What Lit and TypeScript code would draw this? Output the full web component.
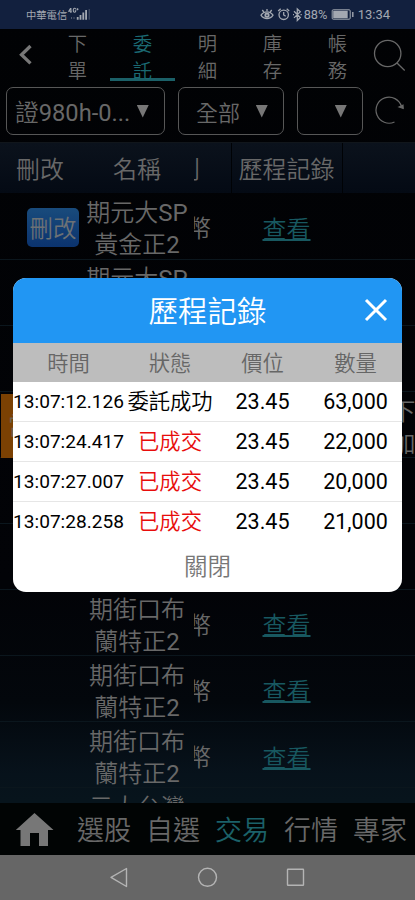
import { LitElement, html, css, nothing } from "lit";
import { customElement } from "lit/decorators.js";
import { classMap } from "lit/directives/class-map.js";

interface Position {
  name: [string, string, string, string];
  editable?: boolean;
  swiped?: boolean;
}

const gold: Position["name"] = ["期元大", "SP", "黃金正", "2"];
const rand: Position["name"] = ["期街口布", "", "蘭特正", "2"];

const positions: Position[] = [
  { name: gold, editable: true },
  { name: gold },
  { name: rand },
  { name: rand, swiped: true },
  { name: rand },
  { name: rand },
  { name: rand },
  { name: rand },
  { name: rand },
  { name: ["元大台灣", "", "正", "2"] },
];

const history = [
  { time: "13:07:12.126", state: "委託成功", price: "23.45", qty: "63,000", done: false },
  { time: "13:07:24.417", state: "已成交", price: "23.45", qty: "22,000", done: true },
  { time: "13:07:27.007", state: "已成交", price: "23.45", qty: "20,000", done: true },
  { time: "13:07:28.258", state: "已成交", price: "23.45", qty: "21,000", done: true },
];

@customElement("status-bar")
class StatusBar extends LitElement {
  static styles = css`
    :host { display: flex; align-items: center; height: 29px; box-sizing: border-box; padding: 0 25px 0 26px; background: #12203e; color: #a3a8b1; font: 400 10.3px/29px Roboto, "Noto Sans CJK TC", sans-serif; }
    .carrier { padding-top: 1px; }
    .cell { margin-left: 1px; }
    .spacer { flex: 1; }
    .right { display: flex; align-items: center; height: 29px; }
    .pct { font-size: 12.8px; width: 27px; }
    .time { font-size: 13px; margin-left: 4px; }
    svg { display: block; fill: none; stroke: currentColor; }
  `;
  render() {
    return html`
      <span class="carrier">中華電信</span>
      <svg class="cell" width="23" height="29" viewBox="0 0 23 29" stroke-width="1.1">
        <path d="M2.6 8.2 .8 11.2h3M2.9 8v5M7.7 9.2c-.6-1.4-2.4-1.2-2.4.6v1c0 2 2.5 1.8 2.5 0H6.8M9.5 8.2v2M8.5 9.2h2" />
        <path d="M3.5 17v2M6 17v2" stroke-width=".7" opacity=".6" />
        <path d="M9.7 17v2.7M12.5 15v4.7M15.3 12.5v7.2M18.1 10v9.7" stroke-width="1.8" />
        <path d="M21.2 9v10.7" stroke-width="1" opacity=".4" />
      </svg>
      <span class="spacer"></span>
      <div class="right">
        <svg width="44" height="29" viewBox="260 0 44 29" stroke-width="1.3">
          <path d="M261 15.2c3-4.5 9-4.5 12 0-3 4.6-9 4.6-12 0zM267 9v2M262.3 10l1.5 2M271.7 10l-1.5 2" />
          <circle cx="267" cy="15.2" r="1.7" stroke-width="1.8" />
          <circle cx="283.7" cy="14.8" r="4.7" />
          <path d="M283.7 12v3l2 1.3M278.2 11l2.5-2.3M289.2 11l-2.5-2.3" />
          <path d="m294 11.3 6.3 6.3-3 2.8V9l3 2.7-6.3 6.2M293 14.6h1M300.5 14.6h1.3" />
        </svg>
        <span class="pct">88%</span>
        <svg width="23" height="29" viewBox="331 0 23 29">
          <rect x="332.2" y="9.8" width="18" height="9.4" rx="1" />
          <path d="M333.2 10.8h14.5v7.4h-14.5z" fill="currentColor" stroke="none" />
          <path d="M352.8 12v5" stroke-width="1.4" />
        </svg>
        <span class="time">13:34</span>
      </div>`;
  }
}

@customElement("order-table")
class OrderTable extends LitElement {
  static styles = css`
    :host { display: flex; flex-direction: column; overflow: hidden; font-size: 24px; }
    .head, .row { display: grid; grid-template-columns: 81px 113px 37.5px 111px 1fr; flex: none; }
    .head { height: 51px; line-height: 55px; background: linear-gradient(#0b121c, #040a14); border-top: 1px solid #11161b; box-sizing: border-box; margin-bottom: .5px; overflow: hidden; }
    .head div { text-align: center; border-right: 1px solid transparent; height: 50px; box-sizing: border-box; }
    .head .rule { border-right-color: #000205; }
    .row { height: 66.1px; box-sizing: border-box; border-bottom: 1px solid #0b161d; align-items: center; }
    .name { text-align: center; line-height: 32px; padding-top: 3.5px; margin-left: -1px; }
    .latin { font-weight: 400; }
    .cut { overflow: hidden; display: flex; justify-content: flex-start; height: 50px; line-height: 54px; }
    .cut span { margin-left: -7px; }
    .head .cut span { margin-left: -18px; }
    .edit { width: 52px; height: 39px; box-sizing: border-box; margin-left: 27px; border-radius: 5px; text-align: center; line-height: 42px; color: #6c7175; background: linear-gradient(#194b7c, #0b336e); font-size: 23.5px; }
    .link { text-align: center; color: #185860; line-height: 34px; text-decoration: underline; text-decoration-thickness: 1.5px; text-underline-offset: 1px; padding-top: 5px; margin-left: -1px; }
    .orange { height: 64px; margin-left: 1px; background: #7b4103; line-height: 64px; padding-left: 7px; box-sizing: border-box; color: #6d6251; }
    .more { line-height: 32px; padding-left: 49px; white-space: nowrap; padding-top: 4px; }
  `;
  render() {
    return html`
      <div class="head">
        <div>刪改</div><div>名稱</div>
        <div class="cut rule"><span>別</span></div>
        <div class="rule">歷程記錄</div><div></div>
      </div>
      ${positions.map(({ name: [a, b, c, d], swiped, editable }) => html`
        <div class="row">
          ${swiped ? html`<div class="orange">當</div>` : editable ? html`<div class="edit">刪改</div>` : html`<div></div>`}
          <div class="name">${a}<span class="latin">${b}</span><br />${c}<span class="latin">${d}</span></div>
          <div class="cut"><span>幣</span></div>
          <div class="link">查看</div>
          ${swiped ? html`<div class="more">下<br />加</div>` : nothing}
        </div>`)}`;
  }
}

@customElement("history-dialog")
class HistoryDialog extends LitElement {
  static styles = css`
    :host { display: flex; flex-direction: column; background: #fff; border-radius: 13px; overflow: hidden; color: #000; }
    .title { position: relative; height: 64.5px; line-height: 68px; flex: none; text-align: center; background: #2196f3; color: #fff; font-size: 29.5px; }
    .close { position: absolute; right: 14px; top: 20px; }
    .grid { display: grid; flex: none; grid-template-columns: 111px 92px 93px 93px; align-items: start; text-align: center; white-space: nowrap; }
    .labels { height: 39.5px; box-sizing: border-box; padding-top: 3px; background: #bdbdbd; color: #666; font-size: 21.3px; line-height: 36px; }
    .row { height: 40px; box-sizing: border-box; border-bottom: 1.5px solid #e6e6e6; font-size: 21.5px; line-height: 40px; }
    .row:nth-last-child(2) { border-color: transparent; }
    .num { font-weight: 400; }
    .time { font-size: 19.1px; }
    .state { font-size: 21.3px; }
    .done { color: #e80c0c; }
    .dismiss { text-align: center; color: #777; font-size: 23.5px; line-height: 50px; }
  `;
  render() {
    return html`
      <div class="title">歷程記錄
        <svg class="close" width="24" height="24" viewBox="0 0 24 24" stroke="#fff" stroke-width="3"><path d="m2 2 20 20M22 2 2 22" /></svg>
      </div>
      <div class="grid labels"><span>時間</span><span>狀態</span><span>價位</span><span>數量</span></div>
      ${history.map((h) => html`
        <div class="grid row">
          <span class="num time">${h.time}</span>
          <span class=${classMap({ state: true, done: h.done })}>${h.state}</span>
          <span class="num">${h.price}</span><span class="num">${h.qty}</span>
        </div>`)}
      <div class="dismiss">關閉</div>`;
  }
}

@customElement("app-root")
class AppRoot extends LitElement {
  static styles = css`
    :host { display: flex; flex-direction: column; position: relative; width: 415px; height: 900px; overflow: hidden; color: #686868; font-family: Roboto, "Noto Sans CJK TC", sans-serif; font-weight: 350; background: linear-gradient(#010204 0, #020307 65%, #03070c 78%, #07121b 86%, #07141c 89%); }
    svg { display: block; fill: none; stroke: currentColor; }
    .tabs { display: flex; height: 53px; flex: none; }
    .back { width: 45px; }
    .tab { width: 65px; box-sizing: border-box; text-align: center; font-size: 19.3px; line-height: 27px; padding-top: 2px; }
    .tab.on { color: #1b6972; border-bottom: 3px solid #1b6068; height: 52px; }
    .filters { display: flex; height: 60px; box-sizing: border-box; padding: 5px 0 8px 6px; font-size: 24px; }
    .select { display: flex; align-items: center; justify-content: space-between; box-sizing: border-box; height: 48px; border: 1.3px solid #575757; border-radius: 7px; padding: 0 15px 0 8px; margin-right: 13px; white-space: nowrap; }
    .latin { font-weight: 400; }
    .account { width: 159px; font-size: 23.7px; }
    .scope { width: 106px; padding-left: 17px; font-size: 22px; }
    .blank { width: 66px; justify-content: flex-end; margin-right: 9px; }
    .arrow { width: 12.5px; height: 13px; background: #777; clip-path: polygon(0 0, 100% 0, 50% 100%); }
    order-table { height: 660.5px; flex: none; }
    .nav { display: flex; align-items: center; height: 52.5px; background: #010404; font-size: 27px; line-height: 56px; padding: 5px 0 0 69.5px; position: relative; box-sizing: border-box; }
    .nav span { width: 69px; text-align: center; flex: none; }
    .nav .on { color: #1b6169; }
    .home { position: absolute; left: 15px; top: 9px; }
    .system { height: 45px; background: #666; color: #b4b4b4; flex: none; }
    history-dialog { position: absolute; left: 13px; top: 278px; width: 389px; height: 314px; }
  `;
  render() {
    const arrow = html`<i class="arrow"></i>`;
    return html`
      <status-bar></status-bar>
      <div class="tabs">
        <svg class="back" width="45" height="53" viewBox="0 0 45 53" stroke-width="3.3" color="#777"><path d="m30.5 17-9 8.7 9 8.7" /></svg>
        ${[["下", "單"], ["委", "託"], ["明", "細"], ["庫", "存"], ["帳", "務"]].map(
          ([a, b], i) => html`<div class=${classMap({ tab: true, on: i === 1 })}>${a}<br />${b}</div>`
        )}
        <svg width="45" height="53" viewBox="370 29 45 53" stroke-width="1.3"><circle cx="387.7" cy="53.5" r="13.2" /><path d="m397 63 7.7 7.5" /></svg>
      </div>
      <div class="filters">
        <div class="select account"><span>證<span class="latin">980h-0...</span></span>${arrow}</div>
        <div class="select scope">全部${arrow}</div>
        <div class="select blank">${arrow}</div>
        <svg width="40" height="48" viewBox="371.5 87 40 48" stroke-width="1.2"><path d="M401 106.5a13 13 0 1 0-7 15.5" /><path d="m398.5 107 4-1.8.2 3.3z" fill="currentColor" /></svg>
      </div>
      <order-table></order-table>
      <div class="nav">
        <svg class="home" width="40" height="37" viewBox="0 0 40 37"><path d="M19.5 1 38.5 18H33v16h-9V21h-9v13H5.5V18H.8z" fill="#777" stroke="none" /></svg>
        <span>選股</span><span>自選</span><span class="on">交易</span><span>行情</span><span>專家</span>
      </div>
      <svg class="system" width="415" height="45" viewBox="0 855 415 45" stroke-width="1.4" stroke-linejoin="round">
        <path d="M126.5 868.5v18L111 877.3z" />
        <circle cx="207.5" cy="877.3" r="9" />
        <rect x="287.5" y="869.3" width="16" height="16" rx=".5" />
      </svg>
      <history-dialog></history-dialog>`;
  }
}
